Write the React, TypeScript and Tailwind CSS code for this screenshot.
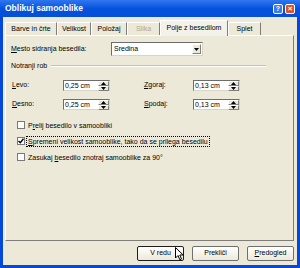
import React from 'react';

const font = { fontFamily: '"Liberation Sans", Arial, sans-serif' };

const tabs = [
  { name: 'Barve in črte', w: 'w-[52px]' },
  { name: 'Velikost', w: 'w-[34px]' },
  { name: 'Položaj', w: 'w-[36px]' },
  { name: 'Slika', w: 'w-[33px]', disabled: true },
  { name: 'Polje z besedilom', w: 'w-[68px]', active: true },
  { name: 'Splet', w: 'w-[33px]' },
];

const Spinner = ({ value }: { value: string }) => (
  <div className="flex h-[11px] w-[47px] items-center border border-t-[#6d6d6d] border-l-[#6d6d6d] border-b-[#d8d5c8] border-r-[#d8d5c8] bg-white">
    <span className="flex-1 pl-[1px] text-[7px] leading-none text-black">{value}</span>
    <div className="flex h-full w-[11px] flex-col">
      <div className="flex flex-1 items-center justify-center border border-t-white border-l-white border-b-[#808080] border-r-[#808080] bg-[#ece9d8]">
        <svg width="5" height="3" viewBox="0 0 5 3"><path d="M2.5 0L5 3H0z" fill="#000" /></svg>
      </div>
      <div className="flex flex-1 items-center justify-center border border-t-white border-l-white border-b-[#808080] border-r-[#808080] bg-[#ece9d8]">
        <svg width="5" height="3" viewBox="0 0 5 3"><path d="M0 0H5L2.5 3z" fill="#000" /></svg>
      </div>
    </div>
  </div>
);

const Check = ({ checked, label, focus }: { checked?: boolean; label: React.ReactNode; focus?: boolean }) => (
  <div className="flex h-[12px] items-center">
    <div className="flex h-[8px] w-[8px] items-center justify-center border border-[#7a7a7a] bg-white">
      {checked && (
        <svg width="6" height="6" viewBox="0 0 6 6"><path d="M0.5 3L2.3 4.8L5.5 0.8" stroke="#000" strokeWidth="1.4" fill="none" /></svg>
      )}
    </div>
    <span
      className={
        'ml-[1px] px-[1px] text-[7px] leading-[9px] text-black ' +
        (focus ? 'border border-dotted border-black' : 'border border-transparent')
      }
    >
      {label}
    </span>
  </div>
);

const Btn = ({ children, def }: { children: React.ReactNode; def?: boolean }) => (
  <div
    className={
      'flex h-[15px] w-[47px] items-center justify-center rounded-[2px] border bg-gradient-to-b from-white to-[#ece9d8] text-[7px] text-black ' +
      (def ? 'border-[#1e1e1e]' : 'border-[#6f6f6f]')
    }
  >
    {children}
  </div>
);

export default function App() {
  return (
    <div className="relative flex h-[268px] w-[300px] flex-col overflow-hidden bg-[#0649d6]" style={font}>
      <div className="flex h-[17px] items-center bg-gradient-to-b from-[#2f76ee] via-[#0453de] to-[#044fd6] pl-[5px] pr-[5px]">
        <span className="flex-1 text-[8.5px] font-bold text-white">Oblikuj samooblike</span>
        <div className="mr-[2px] flex h-[10px] w-[10px] items-center justify-center rounded-[2px] border border-white bg-[#3a7cf0] text-[7px] font-bold leading-none text-white">?</div>
        <div className="flex h-[10px] w-[10px] items-center justify-center rounded-[2px] border border-white bg-[#e2522a] text-[8px] font-bold leading-none text-white">×</div>
      </div>
      <div className="mx-[3px] mb-[3px] flex flex-1 flex-col bg-[#ece9d8]">
        <div className="flex h-[18px] items-end pl-[2px] pt-[3px]">
          {tabs.map((t) => (
            <div
              key={t.name}
              className={
                'flex items-center justify-center border border-b-0 border-l-white border-t-white border-r-[#7d7d7d] text-[7px] ' +
                t.w +
                (t.active ? ' relative z-10 -mb-px h-[16px] bg-[#f3f2ea] text-black' : ' h-[13px] bg-[#ece9d8]') +
                (t.disabled ? ' text-[#aca899]' : ' text-black')
              }
            >
              {t.name}
            </div>
          ))}
        </div>
        <div className="mr-[3px] ml-[2px] flex h-[206px] flex-col border border-l-white border-t-white border-r-[#7d7d7d] border-b-[#7d7d7d] pl-[5px] pt-[6px]">
          <div className="flex h-[14px] items-center">
            <span className="w-[100px] text-[7px] text-black"><u>M</u>esto sidranja besedila:</span>
            <div className="flex h-[14px] w-[92px] items-center border border-t-[#6d6d6d] border-l-[#6d6d6d] border-b-[#d8d5c8] border-r-[#d8d5c8] bg-white">
              <span className="flex-1 pl-[2px] text-[7px] text-black">Sredina</span>
              <div className="mr-[1px] flex h-[10px] w-[9px] items-center justify-center border border-t-white border-l-white border-b-[#808080] border-r-[#808080] bg-[#ece9d8]">
                <svg width="5" height="3" viewBox="0 0 5 3"><path d="M0 0H5L2.5 3z" fill="#000" /></svg>
              </div>
            </div>
          </div>
          <div className="mt-[6px] flex h-[8px] items-center pr-[27px]">
            <span className="text-[7px] text-black">Notranji rob</span>
            <div className="ml-[4px] h-[2px] flex-1 border-t border-b border-t-[#c5c2b2] border-b-white" />
          </div>
          <div className="mt-[10px] flex items-center pl-[1px]">
            <span className="w-[51px] text-[7px] text-black"><u>L</u>evo:</span>
            <Spinner value="0,25 cm" />
            <span className="ml-[34px] w-[49px] text-[7px] text-black"><u>Z</u>goraj:</span>
            <Spinner value="0,13 cm" />
          </div>
          <div className="mt-[8px] flex items-center pl-[1px]">
            <span className="w-[51px] text-[7px] text-black"><u>D</u>esno:</span>
            <Spinner value="0,25 cm" />
            <span className="ml-[34px] w-[49px] text-[7px] text-black"><u>S</u>podaj:</span>
            <Spinner value="0,13 cm" />
          </div>
          <div className="mt-[9px] flex flex-col gap-[4px] pl-[6px]">
            <Check label={<>P<u>r</u>elij besedilo v samoobliki</>} />
            <Check checked focus label={<><u>S</u>premeni velikost samooblike, tako da se prilega besedilu</>} />
            <Check label={<>Zasukaj <u>b</u>esedilo znotraj samooblike za 90°</>} />
          </div>
        </div>
        <div className="mt-[5px] flex justify-end gap-[8px] pr-[3px]">
          <Btn def>V redu</Btn>
          <Btn>Prekliči</Btn>
          <Btn><u>P</u>redogled</Btn>
        </div>
      </div>
      <svg className="absolute left-[175px] top-[247px]" width="9" height="14" viewBox="0 0 9 14">
        <path d="M0.5 0.5V11L3 8.5L4.8 12.8L6.5 12L4.8 8H8.2Z" fill="#fff" stroke="#000" strokeWidth="1" />
      </svg>
    </div>
  );
}
